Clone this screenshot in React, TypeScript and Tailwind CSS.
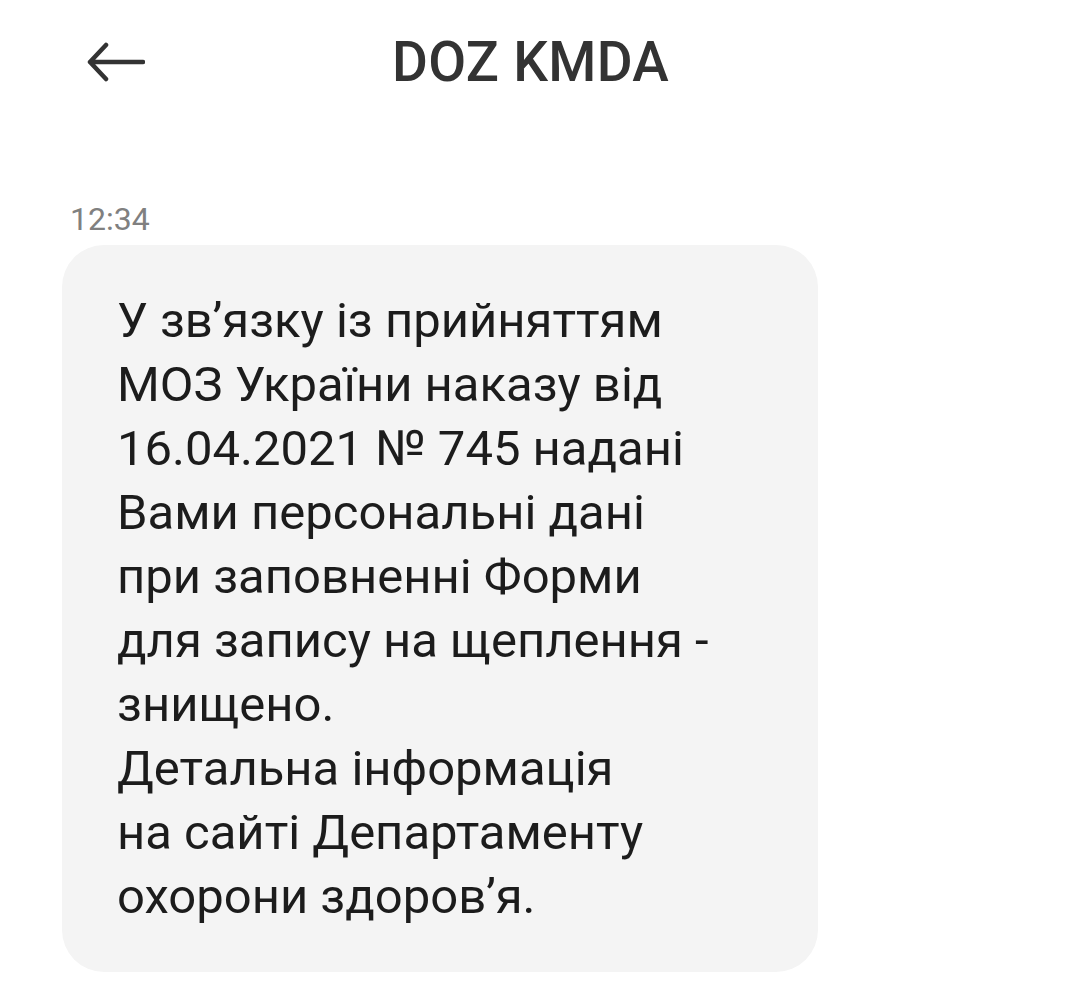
const lines = [
  "У зв’язку із прийняттям",
  "МОЗ України наказу від",
  "16.04.2021 № 745 надані",
  "Вами персональні дані",
  "при заповненні Форми",
  "для запису на щеплення -",
  "знищено.",
  "Детальна інформація",
  "на сайті Департаменту",
  "охорони здоров’я.",
];

function BackArrow() {
  return (
    <svg width="58" height="40" viewBox="0 0 58 40" fill="none" className="shrink-0">
      <path
        d="M56 20H3M19 3L3 20L19 37"
        stroke="#333333"
        strokeWidth="4.5"
        strokeLinecap="round"
        strokeLinejoin="round"
      />
    </svg>
  );
}

export default function App() {
  return (
    <div className="w-[1080px] h-[996px] bg-white font-['Roboto','Liberation_Sans',sans-serif]">
      {/* шапка */}
      <div className="h-[124px] flex items-center pl-[87px]">
        <BackArrow />
        <h1 className="ml-[247px] text-[55px] leading-none font-medium text-[#333333] tracking-[0.3px]">
          DOZ KMDA
        </h1>
      </div>

      <div className="pl-[70px] pt-[76px] text-[32px] leading-[38px] text-[#808080]">12:34</div>

      {/* повідомлення */}
      <div className="ml-[62px] mt-[7px] w-[756px] rounded-[42px] bg-[#f4f4f4] pl-[55px] pt-[44px] pb-[43px]">
        <p className="text-[49px] leading-[64px] text-[#1c1c1c]">
          {lines.map((l, i) => (
            <span key={i} className="block whitespace-nowrap">
              {l}
            </span>
          ))}
        </p>
      </div>
    </div>
  );
}
